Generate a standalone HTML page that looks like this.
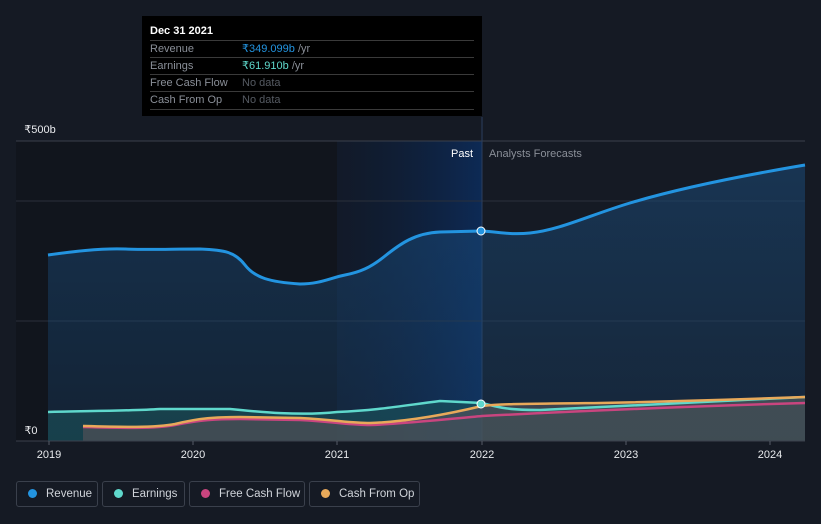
<!DOCTYPE html>
<html><head><meta charset="utf-8"><style>
body{margin:0;background:#151a24;width:821px;height:524px;overflow:hidden;font-family:"Liberation Sans",sans-serif;position:relative}
.tip{position:absolute;left:142px;top:16px;width:340px;height:100px;background:#000;color:#fff;font-size:11px}
.tip .h{position:absolute;left:8px;top:9px;font-weight:bold}
.tip .r{position:absolute;left:8px;width:324px;height:17px;border-top:1px solid #3a3a3a;color:#8a8f98;line-height:17px}
.tip .r span{position:absolute;left:92px}
.leg{position:absolute;top:481px;height:26px;border:1px solid #3a404c;border-radius:3px;color:#d0d4da;font-size:11.5px;line-height:25px;box-sizing:border-box;white-space:nowrap;overflow:hidden}
.leg i{display:inline-block;width:9px;height:9px;border-radius:50%;margin:0 9px 0 11px;vertical-align:-1px}
</style></head><body>
<svg width="821" height="524" style="position:absolute;left:0;top:0">
<defs>
<linearGradient id="pg" x1="0" x2="1"><stop offset="0" stop-color="#0b1a33" stop-opacity="0.3"/><stop offset="1" stop-color="#0d2a55"/></linearGradient>
<linearGradient id="rf" x1="0" y1="0" x2="0" y2="1"><stop offset="0" stop-color="#1a4a78" stop-opacity="0.55"/><stop offset="1" stop-color="#1a4a78" stop-opacity="0.25"/></linearGradient>
</defs>
<rect x="16" y="141" width="321" height="300" fill="#11151d"/>
<rect x="337" y="141" width="145" height="300" fill="url(#pg)"/>
<line x1="16" y1="141" x2="805" y2="141" stroke="#3a404c"/>
<line x1="16" y1="201" x2="805" y2="201" stroke="#2a303b"/>
<line x1="16" y1="321" x2="805" y2="321" stroke="#2a303b"/>
<line x1="482" y1="117" x2="482" y2="441" stroke="#2c3f5e"/>
<path d="M48,255 C70,252 100,248 125,249 C150,250 170,249 200,249 C225,250 235,252 245,265 C255,278 270,282 300,284 C320,284 330,278 345,275 C360,272 370,268 385,256 C400,244 415,233 440,232 L482,231 C500,232 510,235 530,233 C560,230 590,215 630,203 C680,188 740,176 805,165 L805,441 L48,441 Z" fill="url(#rf)"/>
<path d="M48,412 C80,411 130,411 160,409 L230,409 C260,412 300,416 337,412 C380,410 400,406 440,401 L482,403 C500,408 510,410 540,410 C600,407 700,402 805,397 L805,441 L48,441Z" fill="#1c5a5e" fill-opacity="0.55"/>
<path d="M83,426 C120,427 155,428 175,424 C200,418 215,417 240,417 L300,418 C337,420 350,423 370,423 C400,422 440,416 482,406 C500,404 510,404 600,403 C700,401 805,397 805,397 L805,441 L83,441Z" fill="#5a5458" fill-opacity="0.6"/>
<path d="M48,255 C70,252 100,248 125,249 C150,250 170,249 200,249 C225,250 235,252 245,265 C255,278 270,282 300,284 C320,284 330,278 345,275 C360,272 370,268 385,256 C400,244 415,233 440,232 L482,231 C500,232 510,235 530,233 C560,230 590,215 630,203 C680,188 740,176 805,165" fill="none" stroke="#2394e0" stroke-width="3"/>
<path d="M48,412 C80,411 130,411 160,409 L230,409 C260,412 300,416 337,412 C380,410 400,406 440,401 L482,403 C500,408 510,410 540,410 C600,407 700,402 805,397" fill="none" stroke="#5fd8cc" stroke-width="2.5"/>
<path d="M83,427 C120,428 155,429 175,425 C200,420 215,419 240,419 L300,420 C337,422 350,425 370,425 C400,424 440,420 482,416 C600,410 700,406 805,403" fill="none" stroke="#c9457f" stroke-width="2.5"/>
<path d="M83,426 C120,427 155,428 175,424 C200,418 215,417 240,417 L300,418 C337,420 350,423 370,423 C400,422 440,416 482,406 C500,404 510,404 600,403 C700,401 805,397 805,397" fill="none" stroke="#e8a95a" stroke-width="2.5"/>
<circle cx="481" cy="231" r="4" fill="#2394e0" stroke="#fff" stroke-width="1"/>
<circle cx="481" cy="404" r="4" fill="#5fd8cc" stroke="#fff" stroke-width="1"/>
<line x1="16" y1="441" x2="805" y2="441" stroke="#3a404c"/>
<g stroke="#555b66"><line x1="49" y1="441" x2="49" y2="445"/><line x1="193" y1="441" x2="193" y2="445"/><line x1="337" y1="441" x2="337" y2="445"/><line x1="482" y1="441" x2="482" y2="445"/><line x1="626" y1="441" x2="626" y2="445"/><line x1="770" y1="441" x2="770" y2="445"/></g>
<g font-family="Liberation Sans" font-size="11" fill="#e8eaed" text-anchor="middle">
<text x="49" y="458">2019</text><text x="193" y="458">2020</text><text x="337" y="458">2021</text><text x="482" y="458">2022</text><text x="626" y="458">2023</text><text x="770" y="458">2024</text>
<text x="40" y="133">₹500b</text><text x="31" y="434">₹0</text>
</g>
<text x="473" y="157" font-family="Liberation Sans" font-size="11" fill="#fff" text-anchor="end">Past</text>
<text x="489" y="157" font-family="Liberation Sans" font-size="11" fill="#8a8f98">Analysts Forecasts</text>
</svg>
<div class="tip"><div class="h">Dec 31 2021</div>
<div class="r" style="top:24px">Revenue<span><b style="font-weight:normal;color:#2394e0">₹349.099b</b> /yr</span></div>
<div class="r" style="top:41px">Earnings<span><b style="font-weight:normal;color:#5fd8cc">₹61.910b</b> /yr</span></div>
<div class="r" style="top:58px">Free Cash Flow<span style="color:#555a62">No data</span></div>
<div class="r" style="top:75px;border-bottom:1px solid #3a3a3a">Cash From Op<span style="color:#555a62">No data</span></div>
</div>
<div class="leg" style="left:16px;width:82px"><i style="background:#2394e0"></i>Revenue</div>
<div class="leg" style="left:102px;width:83px"><i style="background:#5fd8cc"></i>Earnings</div>
<div class="leg" style="left:189px;width:116px"><i style="background:#c9457f"></i>Free Cash Flow</div>
<div class="leg" style="left:309px;width:111px"><i style="background:#e8a95a"></i>Cash From Op</div>
</body></html>
